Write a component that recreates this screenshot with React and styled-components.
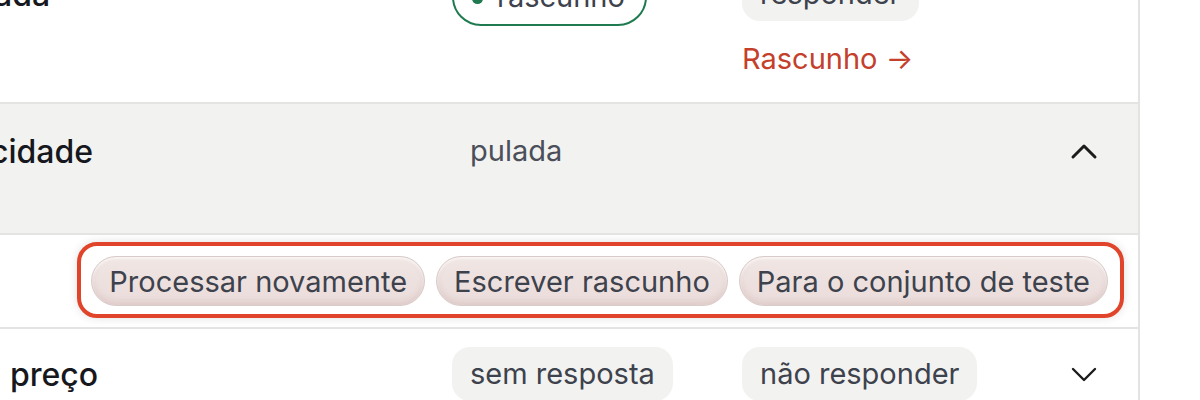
import React from 'react'
import styled, { createGlobalStyle } from 'styled-components'

const GlobalStyle = createGlobalStyle`
    body {
        margin:0;
        background:#ffffff;
        font-family:Inter, "Noto Sans", sans-serif;
        overflow:hidden;
    }
`

const Page = styled.div`
    width:1200px;
    height:400px;
    overflow:hidden;
    background:#ffffff;
`

const Table = styled.div`
    width:1138px;
    margin-top:-53px;
    border-right:2px solid #e3e3e1;
`

const Row = styled.div`
    display:grid;
    grid-template-columns:452px 290px 314px 56px;
    padding:${p => p.$pt}px 26px ${p => p.$pb}px 0;
    background:${p => (p.$open ? '#f2f2f0' : '#ffffff')};
    border-top:${p => (p.$first ? 'none' : '2px solid #e4e4e2')};
    align-items:start;
`

const Title = styled.div`
    height:54px;
    display:flex;
    align-items:center;
    margin-left:${p => p.$indent}px;
    font-size:32px;
    font-weight:500;
    color:#16181d;
    white-space:nowrap;
`

const Cell = styled.div`
    display:flex;
    flex-direction:column;
    align-items:flex-start;
    gap:22px;
`

const Pill = styled.span`
    display:inline-flex;
    align-items:center;
    gap:14px;
    box-sizing:border-box;
    height:${p => (p.$outlined ? '58px' : '54px')};
    margin-top:${p => (p.$outlined ? '1px' : '0')};
    padding:0 ${p => (p.$outlined ? '20px' : '18px')} 0 18px;
    border-radius:${p => (p.$outlined ? '29px' : '18px')};
    background:${p => (p.$plain || p.$outlined ? 'transparent' : '#f2f2f0')};
    border:${p => (p.$outlined ? '2px solid #1f7a50' : 'none')};
    font-size:29px;
    line-height:32px;
    color:${p => (p.$plain ? '#4a4f5a' : '#3d424d')};
    white-space:nowrap;
`

const Dot = styled.span`
    width:11px;
    height:11px;
    margin-top:3px;
    border-radius:50%;
    background:#1f7a50;
`

const DraftLink = styled.a`
    font-size:29px;
    line-height:32px;
    color:#c4402b;
    text-decoration:none;
    cursor:pointer;
`

const Toggle = styled.button`
    height:54px;
    width:56px;
    display:flex;
    align-items:center;
    justify-content:center;
    border:none;
    background:none;
    padding:0;
    color:#1c1c1c;
    cursor:pointer;
`

const Actions = styled.div`
    display:flex;
    justify-content:flex-end;
    padding:7px 14px 9px 0;
    border-top:2px solid #e4e4e2;
    background:#ffffff;
`

const Highlight = styled.div`
    display:flex;
    gap:11px;
    padding:10px 12px 8px 10px;
    border:4px solid #e0452b;
    border-radius:20px;
    box-shadow:0 0 10px rgba(0,0,0,0.12);
`

const ActionButton = styled.button`
    height:50px;
    padding:0 17px;
    border:1px solid #d8cbc9;
    border-radius:25px;
    background:linear-gradient(#f0e6e4, #eadcda);
    box-shadow:inset 0 2px 3px rgba(255,255,255,0.7), inset 0 -3px 6px rgba(150,90,85,0.14);
    font-family:Inter, "Noto Sans", sans-serif;
    font-size:29px;
    color:#3d424d;
    white-space:nowrap;
    cursor:pointer;
`

function Chevron({ up }) {
    return (
        <svg width="28" height="18" viewBox="0 0 28 18" fill="none">
            <polyline
                points={up ? '3,15 14,4 25,15' : '3,4 14,15 25,4'}
                stroke="currentColor"
                strokeWidth={up ? 3 : 2.4}
                strokeLinecap="round"
                strokeLinejoin="round"
            />
        </svg>
    )
}

const actions = ['Processar novamente', 'Escrever rascunho', 'Para o conjunto de teste']

function App() {
    return (
        <Page>
            <GlobalStyle />
            <Table>
                <Row $first $pt={20} $pb={27}>
                    <Title $indent={-6}>ada</Title>
                    <Cell>
                        <Pill $outlined><Dot />rascunho</Pill>
                    </Cell>
                    <Cell>
                        <Pill>responder</Pill>
                        <DraftLink>Rascunho →</DraftLink>
                    </Cell>
                    <div />
                </Row>
                <Row $open $pt={20} $pb={55}>
                    <Title $indent={-10}>cidade</Title>
                    <Cell>
                        <Pill $plain>pulada</Pill>
                    </Cell>
                    <div />
                    <Toggle><Chevron up /></Toggle>
                </Row>
                <Actions>
                    <Highlight>
                        {actions.map(a => (
                            <ActionButton key={a}>{a}</ActionButton>
                        ))}
                    </Highlight>
                </Actions>
                <Row $pt={18} $pb={20}>
                    <Title $indent={10}>preço</Title>
                    <Cell>
                        <Pill>sem resposta</Pill>
                    </Cell>
                    <Cell>
                        <Pill>não responder</Pill>
                    </Cell>
                    <Toggle><Chevron /></Toggle>
                </Row>
            </Table>
        </Page>
    )
}

export default App
